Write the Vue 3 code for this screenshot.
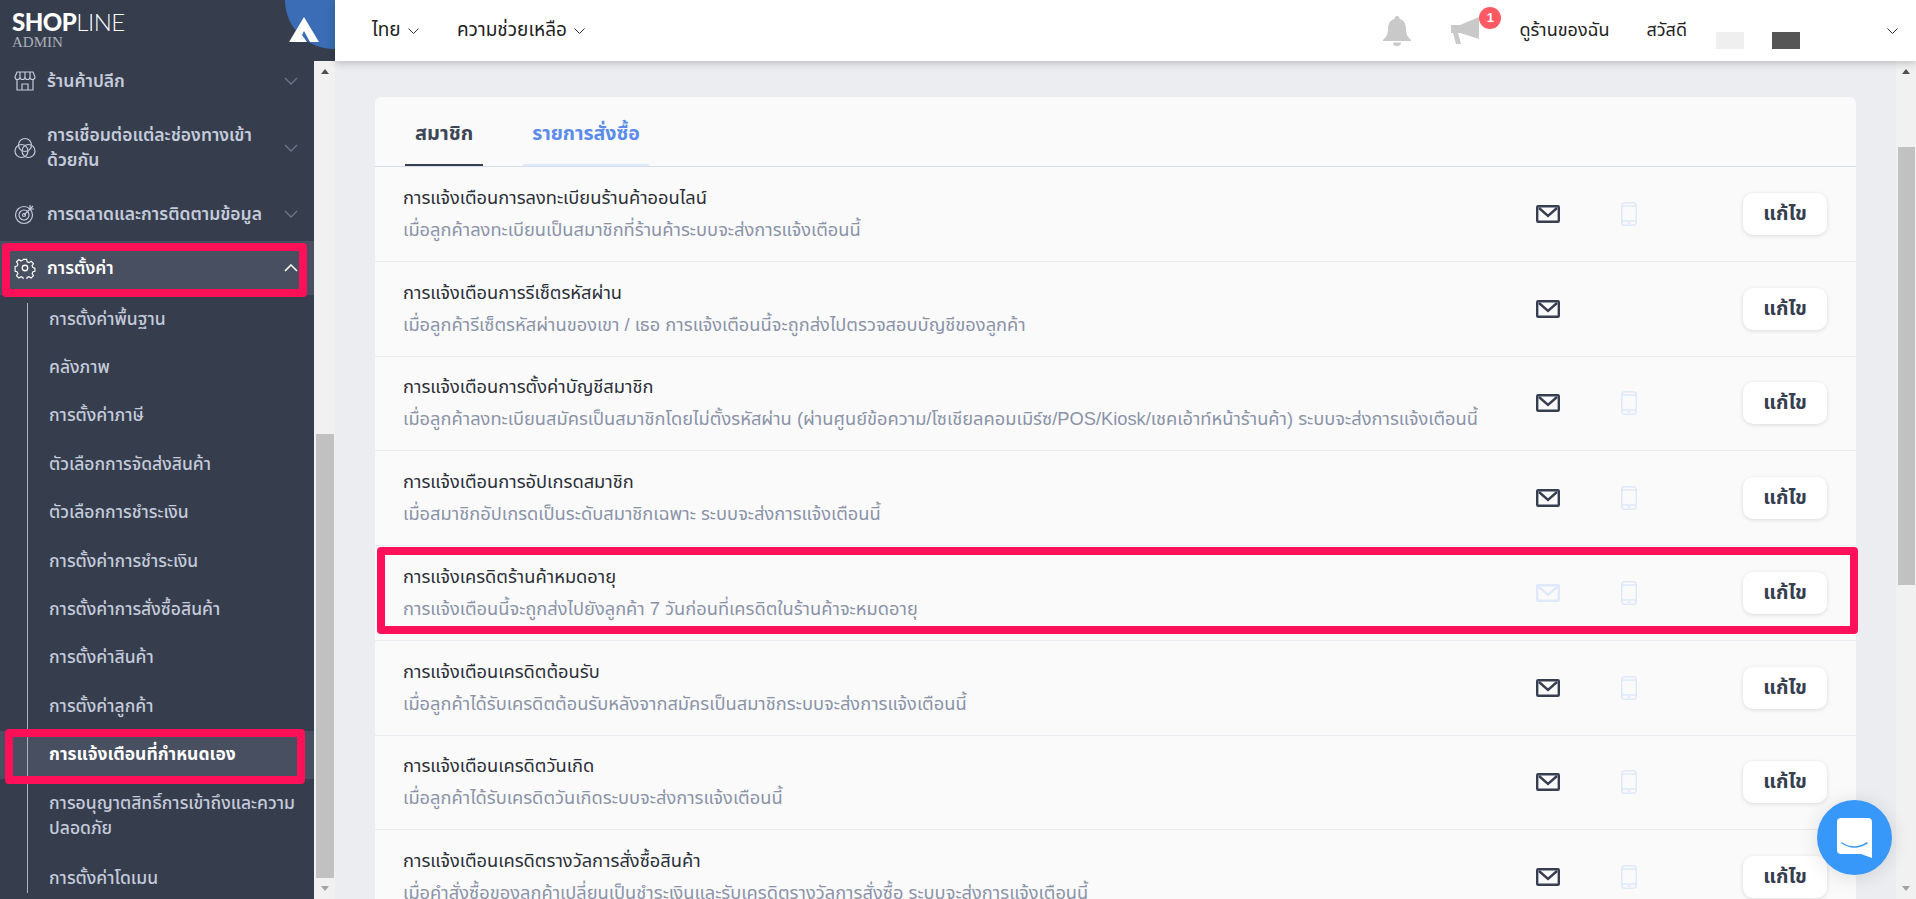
<script setup>
const topItems = [
  { label: 'ร้านค้าปลีก', icon: 'store' },
  { label: 'การเชื่อมต่อแต่ละช่องทางเข้าด้วยกัน', icon: 'rings', tall: true },
  { label: 'การตลาดและการติดตามข้อมูล', icon: 'target' }
]

const subItems = [
  { label: 'การตั้งค่าพื้นฐาน' },
  { label: 'คลังภาพ' },
  { label: 'การตั้งค่าภาษี' },
  { label: 'ตัวเลือกการจัดส่งสินค้า' },
  { label: 'ตัวเลือกการชำระเงิน' },
  { label: 'การตั้งค่าการชำระเงิน' },
  { label: 'การตั้งค่าการสั่งซื้อสินค้า' },
  { label: 'การตั้งค่าสินค้า' },
  { label: 'การตั้งค่าลูกค้า' },
  { label: 'การแจ้งเตือนที่กำหนดเอง', active: true },
  { label: 'การอนุญาตสิทธิ์การเข้าถึงและความปลอดภัย', tall: true },
  { label: 'การตั้งค่าโดเมน' }
]

const rows = [
  { title: 'การแจ้งเตือนการลงทะเบียนร้านค้าออนไลน์', desc: 'เมื่อลูกค้าลงทะเบียนเป็นสมาชิกที่ร้านค้าระบบจะส่งการแจ้งเตือนนี้', mail: true, phone: true },
  { title: 'การแจ้งเตือนการรีเซ็ตรหัสผ่าน', desc: 'เมื่อลูกค้ารีเซ็ตรหัสผ่านของเขา / เธอ การแจ้งเตือนนี้จะถูกส่งไปตรวจสอบบัญชีของลูกค้า', mail: true, phone: false },
  { title: 'การแจ้งเตือนการตั้งค่าบัญชีสมาชิก', desc: 'เมื่อลูกค้าลงทะเบียนสมัครเป็นสมาชิกโดยไม่ตั้งรหัสผ่าน (ผ่านศูนย์ข้อความ/โซเชียลคอมเมิร์ซ/POS/Kiosk/เชคเอ้าท์หน้าร้านค้า) ระบบจะส่งการแจ้งเตือนนี้', mail: true, phone: true },
  { title: 'การแจ้งเตือนการอัปเกรดสมาชิก', desc: 'เมื่อสมาชิกอัปเกรดเป็นระดับสมาชิกเฉพาะ ระบบจะส่งการแจ้งเตือนนี้', mail: true, phone: true },
  { title: 'การแจ้งเครดิตร้านค้าหมดอายุ', desc: 'การแจ้งเตือนนี้จะถูกส่งไปยังลูกค้า 7 วันก่อนที่เครดิตในร้านค้าจะหมดอายุ', mail: false, phone: true },
  { title: 'การแจ้งเตือนเครดิตต้อนรับ', desc: 'เมื่อลูกค้าได้รับเครดิตต้อนรับหลังจากสมัครเป็นสมาชิกระบบจะส่งการแจ้งเตือนนี้', mail: true, phone: true },
  { title: 'การแจ้งเตือนเครดิตวันเกิด', desc: 'เมื่อลูกค้าได้รับเครดิตวันเกิดระบบจะส่งการแจ้งเตือนนี้', mail: true, phone: true },
  { title: 'การแจ้งเตือนเครดิตรางวัลการสั่งซื้อสินค้า', desc: 'เมื่อคำสั่งซื้อของลูกค้าเปลี่ยนเป็นชำระเงินและรับเครดิตรางวัลการสั่งซื้อ ระบบจะส่งการแจ้งเตือนนี้', mail: true, phone: true }
]
</script>

<template>
  <div class="app">
    <aside class="side">
      <div class="logo">
        <div class="logo-text">
          <div class="logo-main"><b>SHOP</b>LINE</div>
          <div class="logo-sub">ADMIN</div>
        </div>
        <div class="logo-corner">
          <svg width="30" height="26" viewBox="0 0 30 26">
            <path d="M15 0 L30 25 L21 25 L15 14 L13 18 L18 25 L0 25 Z" fill="#fff" />
          </svg>
        </div>
      </div>
      <div class="side-body">
        <nav class="nav">
          <div class="nav-list">
            <div v-for="item in topItems" :key="item.label" class="nav-item" :class="{ tall: item.tall }">
              <svg class="nav-icon" width="22" height="22" viewBox="0 0 22 22" fill="none" stroke="#c4cbdb" stroke-width="1.2">
                <template v-if="item.icon === 'store'">
                  <path d="M3 2h16l2 5a2.5 2.5 0 0 1-5 0 2.5 2.5 0 0 1-5 0 2.5 2.5 0 0 1-5 0 2.5 2.5 0 0 1-5 0z" />
                  <path d="M3 10v10h16V10M8 20v-6h6v6M6 2v5M11 2v5M16 2v5" />
                </template>
                <template v-else-if="item.icon === 'rings'">
                  <circle cx="11" cy="8" r="6.5" />
                  <circle cx="7.5" cy="14" r="6.5" />
                  <circle cx="14.5" cy="14" r="6.5" />
                </template>
                <template v-else>
                  <circle cx="10" cy="12" r="8.5" />
                  <circle cx="10" cy="12" r="5" />
                  <circle cx="10" cy="12" r="1.5" />
                  <path d="M10 12L19 3M16 2v4h4" />
                </template>
              </svg>
              <span class="nav-label">{{ item.label }}</span>
              <svg class="nav-chev" width="14" height="8" viewBox="0 0 14 8" fill="none" stroke="#6f7688" stroke-width="1.3"><path d="M1 1l6 6 6-6" /></svg>
            </div>
            <div class="nav-item active">
              <svg class="nav-icon" width="22" height="22" viewBox="0 0 24 24" fill="none" stroke="#fff" stroke-width="1.4">
                <circle cx="12" cy="12" r="3" />
                <path d="M10 1.500h4l.6 3 2.300 1 2.600-1.700 2.800 2.800-1.700 2.600 1 2.300 2.400.6v3.800l-2.400.6-1 2.300 1.700 2.600-2.800 2.800-2.600-1.700-2.300 1-.6 2.400h-4l-.6-2.400-2.300-1-2.600 1.700-2.800-2.800 1.700-2.600-1-2.300-2.400-.6V10.100l2.400-.6 1-2.300-1.700-2.600 2.800-2.800 2.600 1.700 2.300-1z" transform="translate(1.200 1.200) scale(.9)" />
              </svg>
              <span class="nav-label">การตั้งค่า</span>
              <svg class="nav-chev" width="14" height="8" viewBox="0 0 14 8" fill="none" stroke="#fff" stroke-width="1.6"><path d="M1 7l6-6 6 6" /></svg>
            </div>
            <div class="sub-list">
              <div v-for="s in subItems" :key="s.label" class="sub-item" :class="{ active: s.active, tall: s.tall }">{{ s.label }}</div>
            </div>
          </div>
        </nav>
        <div class="bar side-bar">
          <span class="arr up"></span>
          <div class="track"><div class="thumb"></div></div>
          <span class="arr down"></span>
        </div>
      </div>
    </aside>

    <div class="main">
      <header class="head">
        <div class="head-link lang">ไทย <svg class="chev" width="11" height="6" viewBox="0 0 11 6" fill="none" stroke="#333" stroke-width="1"><path d="M.5.5l5 5 5-5" /></svg></div>
        <div class="head-link help">ความช่วยเหลือ <svg class="chev" width="11" height="6" viewBox="0 0 11 6" fill="none" stroke="#333" stroke-width="1"><path d="M.5.5l5 5 5-5" /></svg></div>
        <div class="head-space"></div>
        <svg class="bell" width="28" height="30" viewBox="0 0 28 30" fill="#c9c9c9">
          <path d="M14 0a2.500 2.500 0 0 1 2.500 3C21 4.200 23 8 23 13c0 6 2 8 5 11v1H0v-1c3-3 5-5 5-11 0-5 2-8.800 6.500-10A2.500 2.500 0 0 1 14 0zM10 26.500h8a4 3.500 0 0 1-8 0z" />
        </svg>
        <div class="mega">
          <svg width="32" height="30" viewBox="0 0 32 30" fill="#c9c9c9">
            <path d="M0 9h9L28 1v22L9 17H7l3 11H5L2 17H0z" />
          </svg>
          <span class="badge">1</span>
        </div>
        <div class="head-link shop">ดูร้านของฉัน</div>
        <div class="head-link hello">สวัสดี</div>
        <span class="mask light"></span>
        <span class="mask dark"></span>
        <svg class="chev user" width="11" height="6" viewBox="0 0 11 6" fill="none" stroke="#333" stroke-width="1"><path d="M.5.5l5 5 5-5" /></svg>
      </header>
      <div class="body">
        <div class="content">
          <section class="card">
            <div class="tabs">
              <div class="tab on">สมาชิก</div>
              <div class="tab link">รายการสั่งซื้อ</div>
            </div>
            <div v-for="r in rows" :key="r.title" class="row">
              <div class="row-text">
                <div class="row-title">{{ r.title }}</div>
                <div class="row-desc">{{ r.desc }}</div>
              </div>
              <svg class="mail" width="24" height="18" viewBox="0 0 24 18" fill="none" :stroke="r.mail ? '#363e4f' : '#dfe9fa'" stroke-width="2.400">
                <rect x="1.200" y="1.200" width="21.600" height="15.600" rx="1" />
                <path d="M3 3l9 8 9-8" />
              </svg>
              <div class="phone-slot">
                <svg v-if="r.phone" width="16" height="24" viewBox="0 0 16 24" fill="none" stroke="#dfe9fa" stroke-width="1.5">
                  <rect x=".75" y=".75" width="14.5" height="22.5" rx="3" />
                  <path d="M1 4h14M1 19h14M6.500 21h3" />
                </svg>
              </div>
              <button class="edit" type="button">แก้ไข</button>
            </div>
          </section>
        </div>
        <div class="bar main-bar">
          <span class="arr up"></span>
          <div class="track"><div class="thumb"></div></div>
          <span class="arr down"></span>
        </div>
      </div>
    </div>

    <!-- red annotation boxes drawn on top of the screenshot -->
    <div class="mark mark-settings"></div>
    <div class="mark mark-sub"></div>
    <div class="mark mark-row"></div>

    <div class="chat">
      <svg width="35" height="40" viewBox="0 0 35 40">
        <path d="M4 0h27a4 4 0 0 1 4 4v36l-11-4H4a4 4 0 0 1-4-4V4a4 4 0 0 1 4-4z" fill="#fff" />
        <path d="M5 25q12 8 25 0" fill="none" stroke="#3898fa" stroke-width="1.500" stroke-linecap="round" />
      </svg>
    </div>
  </div>
</template>

<style>
html, body {
  margin: 0;
  overflow: hidden;
}
</style>

<style scoped>
.app {
  position: relative;
  display: flex;
  width: 1916px;
  height: 899px;
  overflow: hidden;
  font-family: "Liberation Sans", "Noto Sans Thai", "Noto Sans", sans-serif;
  font-size: 18px;
  color: #333;
}

/* sidebar */
.side {
  width: 335px;
  flex: none;
  display: flex;
  flex-direction: column;
}
.logo {
  height: 61px;
  flex: none;
  background: #363d4d;
  display: flex;
  justify-content: space-between;
  overflow: hidden;
}
.logo-text {
  padding: 10px 0 0 12px;
  color: #fff;
}
.logo-main {
  font-family: Lato, "Liberation Sans", sans-serif;
  font-size: 24px;
  line-height: 24px;
  font-weight: 300;
  letter-spacing: -0.5px;
}
.logo-main b {
  font-weight: 900;
}
.logo-sub {
  font-family: "Liberation Serif", serif;
  font-size: 15px;
  line-height: 14px;
  margin-top: 1px;
  color: #aab0bb;
}
.logo-corner {
  width: 50px;
  height: 49px;
  background: #3a6db5;
  border-bottom-left-radius: 50px;
  display: flex;
  justify-content: flex-end;
  padding: 17px 16px 0 0;
  box-sizing: border-box;
}
.side-body {
  flex: 1;
  display: flex;
  min-height: 0;
}
.nav {
  width: 314px;
  background: #363d4d;
  overflow: hidden;
}
.nav-list {
  margin-top: -7px;
}
.nav-item {
  height: 54px;
  display: flex;
  align-items: center;
  padding: 0 16px 0 14px;
  color: #c4cbdb;
  font-size: 17.500px;
  font-weight: 600;
}
.nav-item.tall {
  height: 79px;
}
.nav-item.active {
  background: #484f60;
  color: #fff;
}
.nav-icon {
  flex: none;
  margin-right: 11px;
}
.nav-label {
  flex: 1;
  line-height: 25px;
  padding-right: 20px;
}
.nav-chev {
  flex: none;
}
.sub-list {
  margin-left: 27px;
  position: relative;
}
.sub-list::before {
  content: "";
  position: absolute;
  left: 0;
  top: 8px;
  bottom: 9px;
  width: 1px;
  background: #aeb3bd;
}
.sub-item {
  min-height: 48.400px;
  display: flex;
  align-items: center;
  padding-left: 22px;
  padding-right: 8px;
  color: #c4cbdb;
  font-size: 17.500px;
  font-weight: 500;
  line-height: 25px;
  box-sizing: border-box;
}
.sub-item.tall {
  height: 75px;
}
.sub-item.active {
  background: #484f60;
  margin-left: -27px;
  padding-left: 49px;
  color: #fff;
  font-weight: 700;
}

/* scrollbars */
.bar {
  width: 21px;
  flex: none;
  background: #f1f1f1;
  display: flex;
  flex-direction: column;
  align-items: center;
}
.main-bar {
  width: 20px;
}
.track {
  flex: 1;
  width: 100%;
  position: relative;
}
.thumb {
  position: absolute;
  left: 2px;
  right: 1px;
  background: #c1c1c1;
}
.side-bar .thumb {
  top: 352px;
  height: 444px;
}
.main-bar .thumb {
  top: 65px;
  height: 438px;
}
.arr {
  width: 0;
  height: 0;
  border-left: 4.500px solid transparent;
  border-right: 4.500px solid transparent;
  margin: 8px 0;
}
.arr.up {
  border-bottom: 5px solid #505050;
}
.arr.down {
  border-top: 5px solid #a3a3a3;
}

/* header */
.main {
  flex: 1;
  min-width: 0;
  display: flex;
  flex-direction: column;
}
.head {
  position: relative;
  z-index: 2;
  height: 61px;
  flex: none;
  background: #fff;
  box-shadow: 0 2px 8px rgba(0, 0, 0, 0.22);
  display: flex;
  align-items: center;
  padding-left: 37px;
  padding-right: 18px;
  box-sizing: border-box;
}
.head-link {
  color: #222;
  font-size: 18px;
  white-space: nowrap;
}
.lang {
  font-size: 19px;
  margin-right: 38px;
}
.help {
  font-size: 19px;
}
.chev {
  vertical-align: middle;
  margin-left: 2px;
}
.head-space {
  flex: 1;
}
.mega {
  position: relative;
  margin-left: 40px;
  width: 32px;
  height: 30px;
}
.badge {
  position: absolute;
  left: 28px;
  top: -9px;
  width: 22px;
  height: 22px;
  border-radius: 50%;
  background: #ff5a63;
  color: #fff;
  font-size: 13px;
  font-weight: 700;
  line-height: 22px;
  text-align: center;
}
.shop {
  margin-left: 36px;
}
.hello {
  margin-left: 37px;
}
.mask {
  width: 28px;
  height: 17px;
  margin-top: 20px;
}
.mask.light {
  background: #efefef;
  margin-left: 29px;
}
.mask.dark {
  background: #555;
  margin-left: 28px;
}
.chev.user {
  margin-left: 87px;
}

/* content */
.body {
  flex: 1;
  min-height: 0;
  display: flex;
  background: #ebedf0;
}
.content {
  flex: 1;
  min-width: 0;
  overflow: hidden;
  padding: 36px 40px 0;
}
.card {
  background: #fafafa;
  border-radius: 6px 6px 0 0;
}
.tabs {
  height: 70px;
  display: flex;
  padding-left: 30px;
  box-sizing: border-box;
  border-bottom: 1px solid #d6dfe9;
}
.tab {
  height: 69px;
  box-sizing: border-box;
  padding: 0 10px;
  line-height: 72px;
  font-size: 20px;
  font-weight: 700;
  border-bottom: 2px solid #363e4f;
  color: #3e4554;
}
.tab.link {
  margin-left: 40px;
  padding: 0 9px;
  font-size: 19.500px;
  color: #5b8cea;
  border-bottom-color: #e0ebfa;
}
.row {
  height: 94.750px;
  box-sizing: border-box;
  display: flex;
  align-items: center;
  padding: 0 29px 0 28px;
  border-bottom: 1px solid #e8eaf0;
}
.row-text {
  flex: 1;
  min-width: 0;
}
.row-title {
  color: #2b2f38;
  font-size: 18.300px;
  line-height: 24px;
  margin-bottom: 8px;
}
.row-desc {
  color: #8a93a8;
  font-size: 18.300px;
  line-height: 24px;
  white-space: nowrap;
}
.mail {
  flex: none;
}
.phone-slot {
  flex: none;
  width: 16px;
  height: 24px;
  margin-left: 61px;
  margin-right: 106px;
}
.edit {
  flex: none;
  width: 84px;
  height: 42px;
  border: 0;
  border-radius: 10px;
  background: #fff;
  box-shadow: 0 1px 4px rgba(0, 0, 0, 0.13);
  color: #363e4f;
  font: inherit;
  font-size: 20px;
  font-weight: 700;
}

/* overlays */
.mark {
  position: absolute;
  border: 8px solid #ff1058;
  border-radius: 4px;
  box-sizing: border-box;
  pointer-events: none;
}
.mark-settings {
  left: 2px;
  top: 243px;
  width: 305px;
  height: 54px;
}
.mark-sub {
  left: 5px;
  top: 729px;
  width: 300px;
  height: 55px;
}
.mark-row {
  left: 377px;
  top: 547px;
  width: 1481px;
  height: 87px;
}
.chat {
  position: absolute;
  left: 1817px;
  top: 800px;
  width: 75px;
  height: 75px;
  border-radius: 50%;
  background: #3898fa;
  box-shadow: 0 2px 20px rgba(0, 0, 0, 0.12);
  display: flex;
  align-items: center;
  justify-content: center;
}
</style>
